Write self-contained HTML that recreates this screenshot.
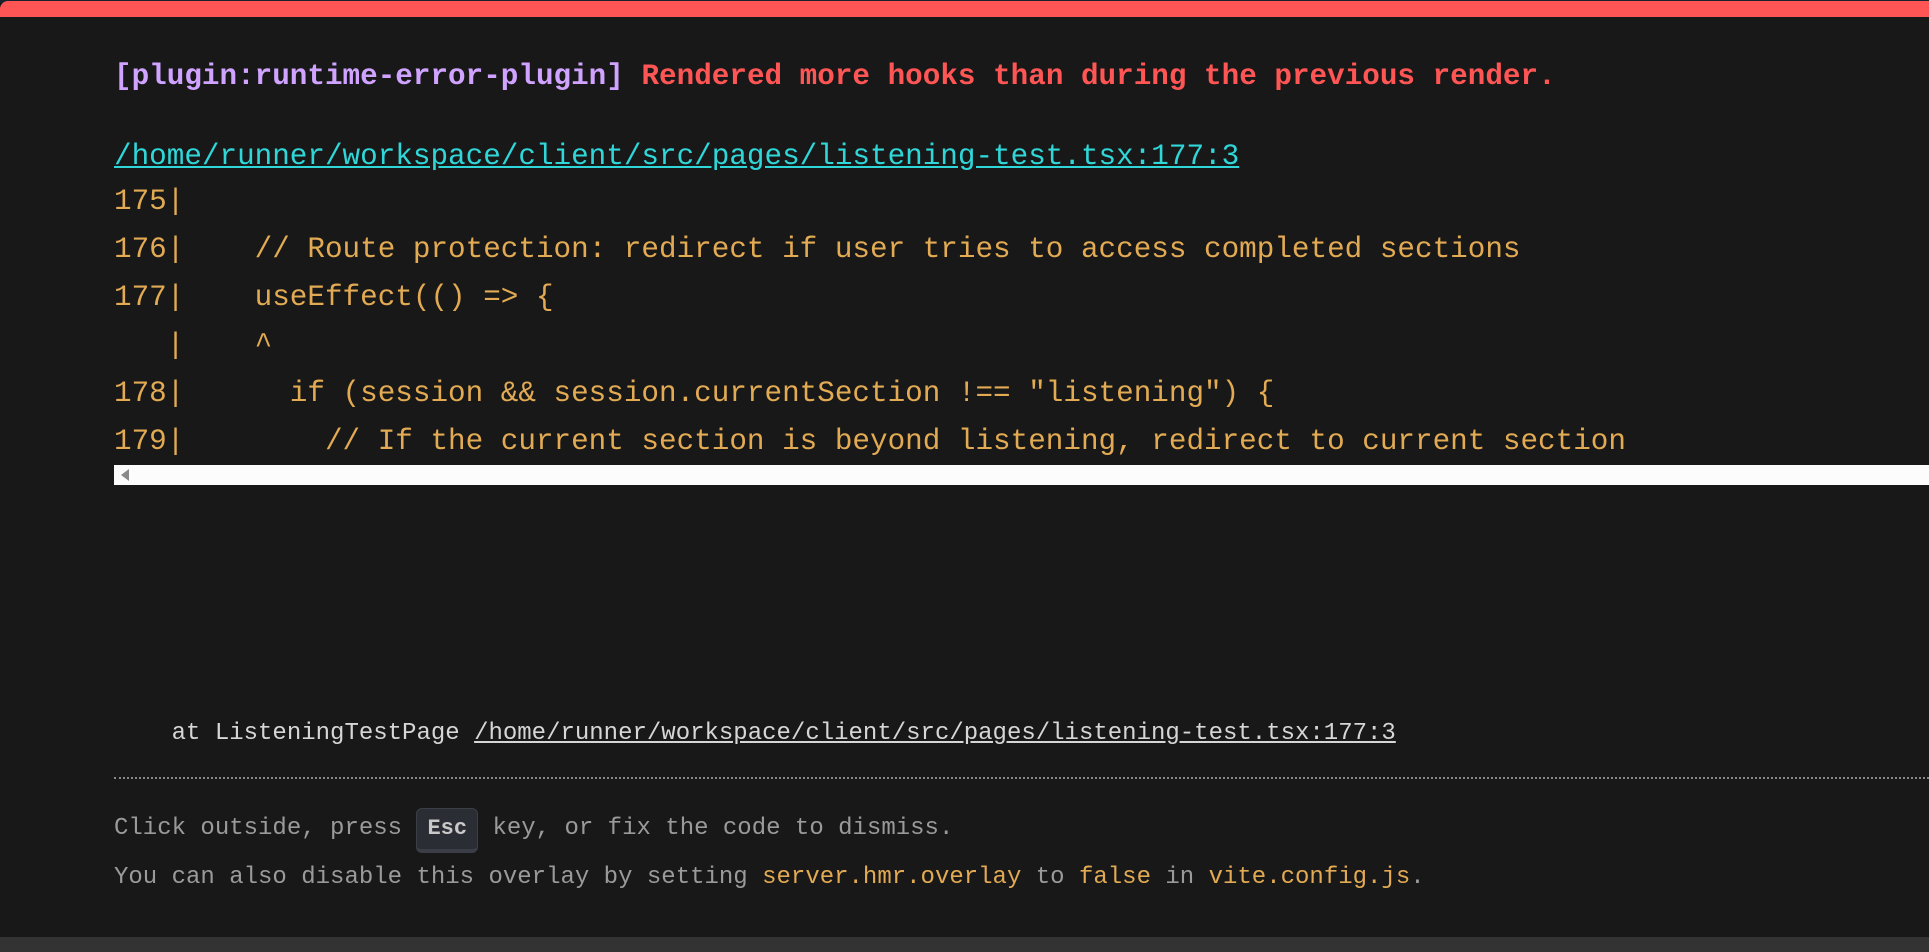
<!DOCTYPE html>
<html><head><meta charset="utf-8"><style>
html,body{margin:0;padding:0;width:1929px;height:952px;overflow:hidden;background:#181818}
.top{position:absolute;left:0;top:0;width:1929px;height:3px;background:#1a2230}
.red{position:absolute;left:0;top:1px;width:1929px;height:16px;background:#ff5555;border-radius:8px 0 0 0}
.card{position:absolute;left:0;top:17px;width:1929px;height:920px;background:#181818}
.bot{position:absolute;left:0;top:937px;width:1929px;height:15px;background:#333}
.l{position:absolute;left:114px;white-space:pre;font-family:"Liberation Mono",monospace;}
.big{font-size:29.3px;line-height:48px}
.sm{font-size:24px;line-height:47px}
.y{color:#e2aa53}
.sb{position:absolute;left:114px;top:465px;width:1815px;height:20px;background:#fcfcfc}
.tri{position:absolute;left:121px;top:469px;width:0;height:0;border-top:6px solid transparent;border-bottom:6px solid transparent;border-right:8px solid #8a8a8a}
.dot{position:absolute;left:114px;top:777px;width:1815px;border-top:2px dotted #888}
kbd{display:inline-block;font-family:"Liberation Mono",monospace;font-weight:bold;font-size:22px;line-height:40px;height:40px;padding:0 10px;background:#2b2d35;color:#c8c8c8;border:1px solid #3c3e47;border-bottom-width:4px;border-radius:6px;vertical-align:middle;position:relative;top:3px}
</style></head><body>
<div class="top"></div>
<div class="red"></div>
<div class="card"></div>
<div class="bot"></div>
<div class="l big" style="top:53px;font-weight:bold"><span style="color:#cfa3ff">[plugin:runtime-error-plugin]</span> <span style="color:#ff5555">Rendered more hooks than during the previous render.</span></div>
<div class="l big" style="top:133px;color:#2fd7d9;text-decoration:underline">/home/runner/workspace/client/src/pages/listening-test.tsx:177:3</div>
<div class="l big y" style="top:178px">175|
176|    // Route protection: redirect if user tries to access completed sections
177|    useEffect(() =&gt; {
   |    ^
178|      if (session &amp;&amp; session.currentSection !== "listening") {
179|        // If the current section is beyond listening, redirect to current section</div>
<div class="sb"></div><div class="tri"></div>
<div class="l sm" style="top:710px;color:#d6d6d6">    at ListeningTestPage <span style="text-decoration:underline">/home/runner/workspace/client/src/pages/listening-test.tsx:177:3</span></div>
<div class="dot"></div>
<div class="l sm" style="top:805px;color:#9a9a9a">Click outside, press <kbd>Esc</kbd> key, or fix the code to dismiss.</div>
<div class="l sm" style="top:854px;color:#9a9a9a">You can also disable this overlay by setting <span class="y">server.hmr.overlay</span> to <span class="y">false</span> in <span class="y">vite.config.js</span>.</div>
</body></html>
